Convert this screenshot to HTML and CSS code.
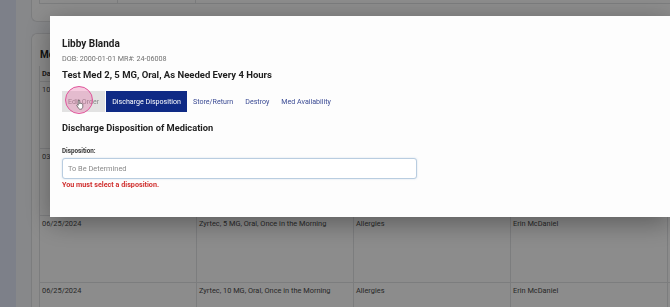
FILE: index.html
```html
<!DOCTYPE html>
<html lang="en">
  <head>
    <meta charset="UTF-8" />
    <meta name="viewport" content="width=device-width, initial-scale=1.0" />
    <title>Discharge Disposition</title>
    <link rel="stylesheet" href="styles.css">
  </head>
  <body>
    <div class="layout">
      <aside class="sidebar"></aside>
      <main class="content">
        <!-- previous card, scrolled mostly out of view -->
        <div class="card card-top">
          <div class="tail-row">
            <div class="tail-cell"></div>
            <div class="tail-cell"></div>
          </div>
        </div>

        <div class="card meds">
          <h2 class="card-title">Medications</h2>
          <div class="grid">
            <div class="grid-row head">
              <div class="cell">Date</div>
              <div class="cell">Medication</div>
              <div class="cell">Reason</div>
              <div class="cell">Prescriber</div>
              <div class="cell">Status</div>
            </div>
            <div class="grid-row">
              <div class="cell">10/14/2024</div>
              <div class="cell">Test Med 2, 5 MG, Oral, As Needed</div>
              <div class="cell">Pain</div>
              <div class="cell">Erin McDaniel</div>
              <div class="cell">Active</div>
            </div>
            <div class="grid-row">
              <div class="cell">03/02/2024</div>
              <div class="cell">Tylenol, 500 MG, Oral</div>
              <div class="cell">Pain</div>
              <div class="cell">Erin McDaniel</div>
              <div class="cell">Active</div>
            </div>
            <div class="grid-row">
              <div class="cell">06/25/2024</div>
              <div class="cell">Zyrtec, 5 MG, Oral, Once in the Morning</div>
              <div class="cell">Allergies</div>
              <div class="cell">Erin McDaniel</div>
              <div class="cell">M</div>
            </div>
            <div class="grid-row">
              <div class="cell">06/25/2024</div>
              <div class="cell">Zyrtec, 10 MG, Oral, Once in the Morning</div>
              <div class="cell">Allergies</div>
              <div class="cell">Erin McDaniel</div>
              <div class="cell">M</div>
            </div>
          </div>
        </div>
      </main>
    </div>

    <!-- modal -->
    <div class="backdrop"></div>
    <div class="modal">
      <div class="patient-name">Libby Blanda</div>
      <div class="patient-meta">DOB: 2000-01-01 MR#: 24-06008</div>
      <div class="med-title">Test Med 2, 5 MG, Oral, As Needed Every 4 Hours</div>

      <div class="tabs">
        <button class="tab tab-gray">Edit Order</button>
        <button class="tab tab-active">Discharge Disposition</button>
        <button class="tab">Store/Return</button>
        <button class="tab">Destroy</button>
        <button class="tab">Med Availability</button>
      </div>

      <h3 class="section-title">Discharge Disposition of Medication</h3>
      <label class="field-label">Disposition:</label>
      <div class="select">To Be Determined</div>
      <div class="error">You must select a disposition.</div>

      <!-- click highlight -->
      <div class="click-ring">
        <svg class="hand" viewBox="0 0 12 14" width="9" height="11">
          <path d="M4 1.2c.6 0 1 .4 1 1V6l.2-.9c.6-.3 1.2 0 1.3.5.5-.3 1.2 0 1.3.6.5-.2 1.2.1 1.2.8v3c0 1.8-1.2 3.3-3 3.3H5.6c-1 0-1.7-.5-2.2-1.2L1.3 8.8c-.4-.5-.3-1.1.2-1.4.4-.2.9-.1 1.2.2L3 8V2.2c0-.6.4-1 1-1z" fill="#fff" stroke="#333" stroke-width=".8" stroke-linejoin="round"/>
        </svg>
      </div>
    </div>
  </body>
</html>
```

FILE: styles.css
```css
body {
  font-family: Roboto, "Liberation Sans", sans-serif;
  background-color: #f6f8fc;
  color: #222;
  margin: 0;
  height: 100vh;
  overflow: hidden;
}
.layout {
  display: flex;
  height: 100%;
}
.sidebar {
  width: 16px;
  flex-shrink: 0;
  background: #e4eaf9;
}
.content {
  flex: 1;
  min-width: 0;
  overflow: hidden;
  padding: 0 0 0 15px;
}
.card {
  background: #ffffff;
  border: 1px solid #e2e3e6;
  border-right: none;
}
.card-top {
  height: 21px;
  border-top: none;
  border-radius: 0 0 0 6px;
  padding-left: 7px;
}
.tail-row {
  display: flex;
  height: 3px;
  border-bottom: 1px solid #e2e3e6;
  border-left: 1px solid #e2e3e6;
}
.tail-cell {
  width: 77px;
  border-right: 1px solid #e2e3e6;
}
.meds {
  margin-top: 11px;
  border-radius: 6px 0 0 6px;
  padding: 14px 0 0 7px;
}
.card-title {
  margin: 0 0 4px 1px;
  font-size: 10px;
  line-height: 14px;
  font-weight: bold;
  color: #222;
}
.grid {
  border-left: 1px solid #e2e3e6;
}
.grid-row {
  display: grid;
  grid-template-columns: repeat(5, 157px);
  height: 66px;
  border-bottom: 1px solid #e2e3e6;
}
.grid-row.head {
  height: 15px;
  font-weight: bold;
}
.cell {
  border-right: 1px solid #e2e3e6;
  padding: 3px 2px;
  font-size: 7.4px;
  line-height: 10px;
  color: #4a4a4a;
  white-space: nowrap;
  overflow: hidden;
}
.head .cell {
  padding-top: 3px;
  color: #333;
}

/* modal */
.backdrop {
  position: fixed;
  inset: 0;
  background: rgba(0, 0, 0, 0.45);
}
.modal {
  position: fixed;
  left: 50px;
  top: 16px;
  width: 620px;
  height: 201px;
  box-sizing: border-box;
  padding: 21px 12px 0;
  background: #fdfdfd;
  box-shadow: 0 6px 24px rgba(0, 0, 0, 0.35);
}
.patient-name {
  font-size: 10px;
  line-height: 14px;
  font-weight: bold;
  color: #1f1f1f;
}
.patient-meta {
  margin-top: 3px;
  font-size: 7.2px;
  line-height: 10px;
  color: #707070;
}
.med-title {
  margin-top: 4px;
  font-size: 9.5px;
  line-height: 14px;
  font-weight: bold;
  color: #1f1f1f;
}
.tabs {
  display: flex;
  margin-top: 9px;
}
.tab {
  height: 21px;
  padding: 0 6px;
  border: none;
  background: transparent;
  font-family: inherit;
  font-size: 7.1px;
  color: #3b4b94;
  cursor: pointer;
}
.tab-gray {
  margin-right: 1px;
  background: #e2e2e2;
  color: #8a8a8a;
}
.tab-active {
  background: #0f2a85;
  color: #ffffff;
}
.section-title {
  margin: 9px 0 12px;
  font-size: 9.3px;
  line-height: 14px;
  font-weight: bold;
  color: #1f1f1f;
}
.field-label {
  display: block;
  font-size: 6.3px;
  line-height: 9px;
  font-weight: bold;
  color: #333;
}
.select {
  margin-top: 2px;
  width: 355px;
  height: 21px;
  box-sizing: border-box;
  padding: 0 5px;
  border: 1px solid #b9cde0;
  border-radius: 3px;
  box-shadow: 0 0 2px rgba(120, 160, 200, 0.35);
  font-size: 7.4px;
  line-height: 19px;
  color: #8a8a8a;
  background: #fff;
}
.error {
  margin-top: 1px;
  font-size: 7.2px;
  line-height: 9px;
  font-weight: bold;
  color: #d0302f;
}
.click-ring {
  position: absolute;
  left: 15px;
  top: 70px;
  width: 28px;
  height: 28px;
  box-sizing: border-box;
  border: 1.5px solid #e0559b;
  border-radius: 50%;
  background: rgba(232, 96, 160, 0.3);
}
.hand {
  position: absolute;
  left: 10px;
  top: 12px;
}
```
